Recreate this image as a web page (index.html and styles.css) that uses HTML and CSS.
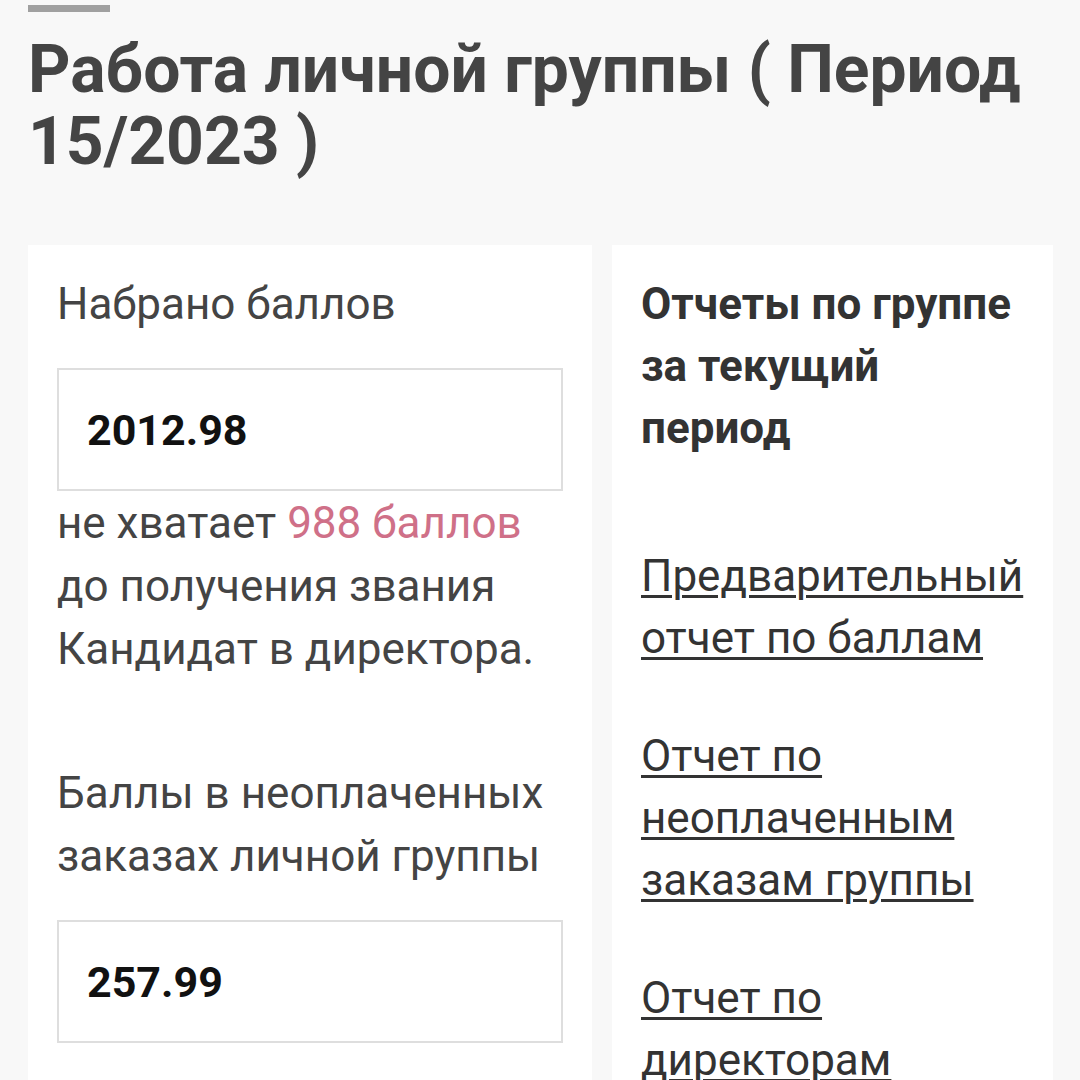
FILE: index.html
```html
<!DOCTYPE html>
<html lang="ru">
<head>
    <meta charset="UTF-8">
    <meta name="viewport" content="width=device-width, initial-scale=1.0">
    <title>Работа личной группы</title>
    <link rel="stylesheet" href="styles.css">
</head>
<body>
    <div class="page">
        <div class="top-rule"></div>
        <h1 class="page-title">Работа личной группы ( Период 15/2023 )</h1>

        <div class="cards">
            <div class="card card-points">
                <div class="label">Набрано баллов</div>
                <div class="value-box">2012.98</div>
                <p class="note">не хватает <span class="accent">988 баллов</span> до получения звания Кандидат в директора.</p>

                <div class="label label-spaced">Баллы в неоплаченных заказах личной группы</div>
                <div class="value-box">257.99</div>
            </div>

            <div class="card card-reports">
                <div class="reports-heading">Отчеты по группе за текущий период</div>
                <a class="report-link" href="#">Предварительный отчет по баллам</a>
                <a class="report-link" href="#">Отчет по неоплаченным заказам группы</a>
                <a class="report-link" href="#">Отчет по директорам</a>
            </div>
        </div>
    </div>
</body>
</html>
```

FILE: styles.css
```css
body {
    margin: 0;
    background-color: #f8f8f8; /* light gray page */
    font-family: Roboto, "Noto Sans", Arial, sans-serif;
    color: #444;
    overflow: hidden;
}

.page {
    padding: 5px 26px 0 28px;
}

.top-rule {
    width: 82px;
    height: 7px;
    background-color: #a0a0a0;
}

.page-title {
    margin: 22px 0 67px;
    font-size: 66px;
    line-height: 72px;
    font-weight: 700;
    color: #444;
}

.cards {
    display: grid;
    grid-template-columns: 564px 441px;
    gap: 20px;
    align-items: start;
}

.card {
    background-color: white;
    padding: 28px 29px 40px;
}

.label {
    font-size: 44px;
    line-height: 63px;
    color: #444;
}

.label-spaced {
    margin-top: 81px;
}

.value-box {
    margin-top: 32px;
    height: 119px;
    padding: 0 28px;
    border: 2px solid #dedede;
    display: flex;
    align-items: center;
    font-size: 43px;
    font-weight: 700;
    color: #111;
}

.note {
    margin: 1px 0 0;
    font-size: 44px;
    line-height: 63px;
    color: #444;
}

.accent {
    color: #cf7088; /* pink highlight */
}

.reports-heading {
    font-size: 44px;
    line-height: 62px;
    font-weight: 700;
    color: #333;
    margin-bottom: 86px;
}

.report-link {
    display: block;
    font-size: 44px;
    line-height: 62px;
    color: #333;
    text-decoration: underline;
    text-decoration-thickness: 3px;
    text-underline-offset: 4px;
    margin-bottom: 56px;
}
```
